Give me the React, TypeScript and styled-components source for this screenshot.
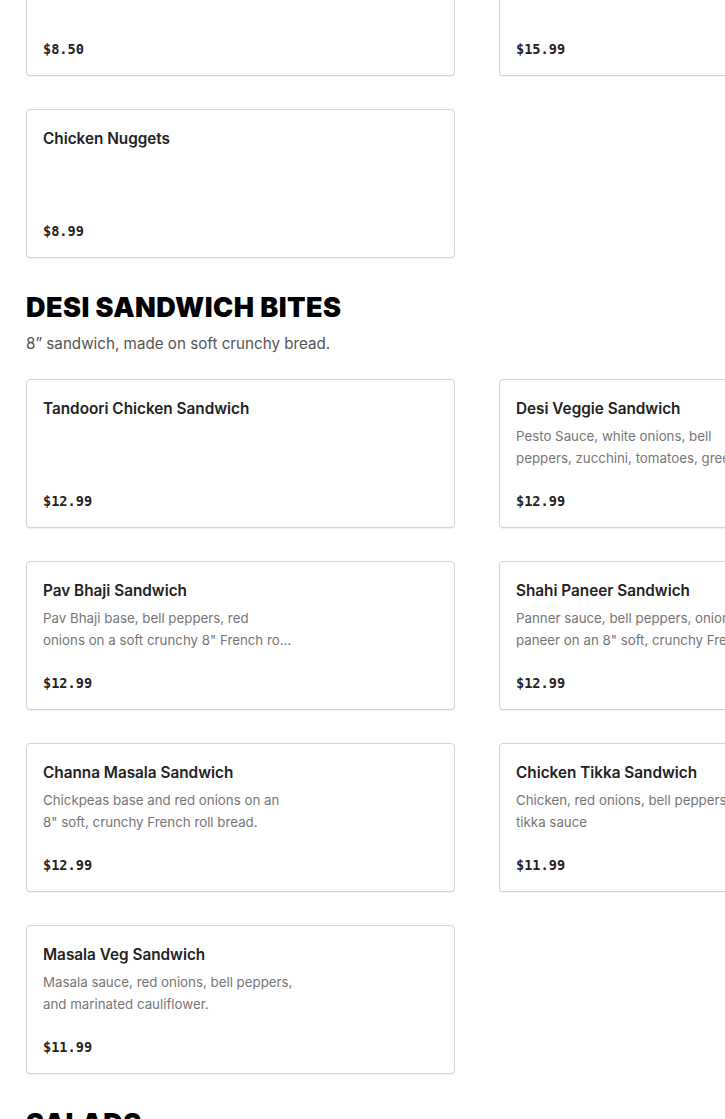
import React from 'react';
import styled, {createGlobalStyle} from 'styled-components';

const GlobalStyle = createGlobalStyle`
  html, body {
    margin: 0;
    padding: 0;
    overflow: hidden;
    background: #ffffff;
  }
  body {
    font-family: Inter, "Noto Sans", sans-serif;
    color: #191919;
  }
`;

const Page = styled.main`
  width: 1000px;
  box-sizing: border-box;
  padding: 0 26px;
  // page is scrolled: the first row starts above the window
  margin-top: -73px;
`;

const Section = styled.section`
  margin-bottom: 33px;
`;

const SectionTitle = styled.h2`
  margin: 0;
  font-family: Inter, sans-serif;
  font-size: 27px;
  font-weight: 900;
  line-height: 34px;
  letter-spacing: 0.45px;
  color: #000;
  text-transform: uppercase;
`;

const SectionNote = styled.p`
  margin: 8px 0 0;
  font-size: 15.2px;
  line-height: 22px;
  color: #555;
`;

const Grid = styled.div<{$top?: boolean}>`
  display: grid;
  grid-template-columns: 429px 429px;
  column-gap: 44px;
  row-gap: 33px;
  margin-top: ${({$top}) => ($top ? '0' : '24px')};
`;

const Card = styled.article`
  display: flex;
  flex-direction: column;
  box-sizing: border-box;
  height: 149px;
  padding: 19px 16px 16px;
  border: 1px solid #d4d4d4;
  border-radius: 4px;
  box-shadow: 0 1px 1px rgba(0, 0, 0, 0.06);
  background: #fff;
`;

const ItemName = styled.h3`
  margin: 0;
  font-size: 15.3px;
  font-weight: 600;
  line-height: 20px;
  color: #222;
`;

const ItemDesc = styled.p`
  margin: 6px 0 0;
  max-width: 250px;
  font-size: 13.3px;
  line-height: 22px;
  color: #767676;
  display: -webkit-box;
  -webkit-line-clamp: 2;
  -webkit-box-orient: vertical;
  overflow: hidden;
`;

const Price = styled.div`
  margin-top: auto;
  font-family: "DejaVu Sans Mono", "Liberation Mono", monospace;
  font-size: 13.6px;
  font-weight: 700;
  line-height: 20px;
  color: #222;
`;

interface Item {
  name: string;
  desc?: string;
  price: string;
}

const MenuCard: React.FC<{item: Item}> = ({item}) => (
  <Card>
    <ItemName>{item.name}</ItemName>
    {item.desc && <ItemDesc>{item.desc}</ItemDesc>}
    <Price>{item.price}</Price>
  </Card>
);

const bites: Item[] = [
  {name: 'Samosa', price: '$8.50'},
  {name: 'Chicken 65', price: '$15.99'},
  {name: 'Chicken Nuggets', price: '$8.99'},
];

const sandwiches: Item[] = [
  {name: 'Tandoori Chicken Sandwich', price: '$12.99'},
  {
    name: 'Desi Veggie Sandwich',
    desc: 'Pesto Sauce, white onions, bell peppers, zucchini, tomatoes, green chillies on a soft crunchy 8" French roll bread.',
    price: '$12.99',
  },
  {
    name: 'Pav Bhaji Sandwich',
    desc: 'Pav Bhaji base, bell peppers, red onions on a soft crunchy 8" French roll bread.',
    price: '$12.99',
  },
  {
    name: 'Shahi Paneer Sandwich',
    desc: 'Panner sauce, bell peppers, onions and paneer on an 8" soft, crunchy French roll bread.',
    price: '$12.99',
  },
  {
    name: 'Channa Masala Sandwich',
    desc: 'Chickpeas base and red onions on an 8" soft, crunchy French roll bread.',
    price: '$12.99',
  },
  {
    name: 'Chicken Tikka Sandwich',
    desc: 'Chicken, red onions, bell peppers and tikka sauce',
    price: '$11.99',
  },
  {
    name: 'Masala Veg Sandwich',
    desc: 'Masala sauce, red onions, bell peppers, and marinated cauliflower.',
    price: '$11.99',
  },
];

export default function App() {
  return (
    <>
      <GlobalStyle />
      <Page>
        <Section>
          <Grid $top>
            {bites.map((item) => (
              <MenuCard key={item.name} item={item} />
            ))}
          </Grid>
        </Section>
        <Section>
          <SectionTitle>Desi Sandwich Bites</SectionTitle>
          <SectionNote>8” sandwich, made on soft crunchy bread.</SectionNote>
          <Grid>
            {sandwiches.map((item) => (
              <MenuCard key={item.name} item={item} />
            ))}
          </Grid>
        </Section>
        <Section>
          <SectionTitle>Salads</SectionTitle>
        </Section>
      </Page>
    </>
  );
}
